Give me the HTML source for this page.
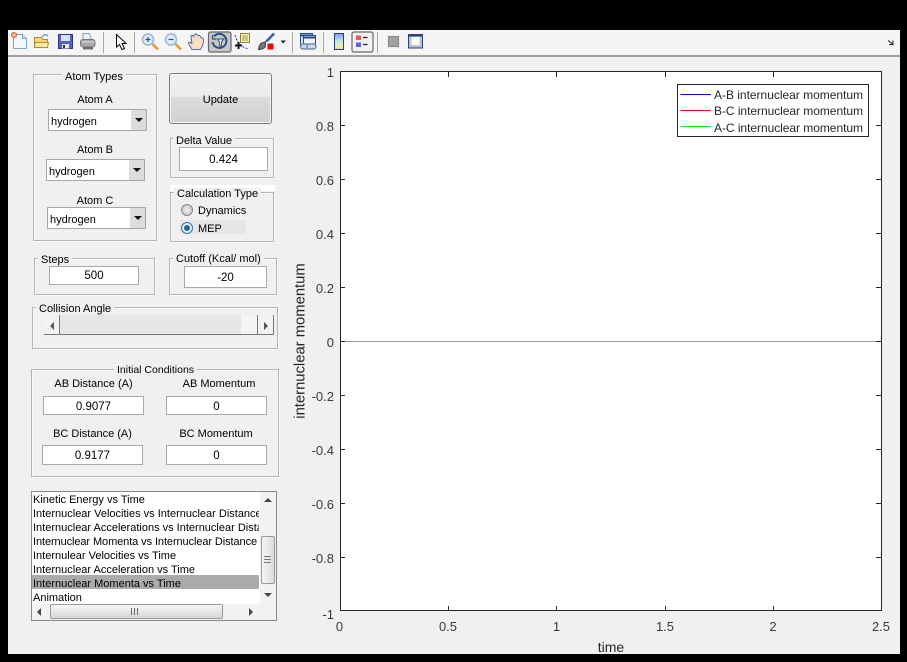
<!DOCTYPE html>
<html><head><meta charset="utf-8">
<style>
html,body{margin:0;padding:0;background:#000;}
#root{position:relative;width:907px;height:662px;overflow:hidden;background:#000;font-family:"Liberation Sans",sans-serif;font-size:11px;color:#000;}
#fig{position:absolute;left:8px;top:30px;width:891.5px;height:623.5px;background:#f0f0f0;}
#tb{position:absolute;left:8px;top:30px;width:891.5px;height:25px;background:#f5f5f5;border-bottom:2px solid #a0a0a0;box-sizing:content-box;}
.a{position:absolute;box-sizing:border-box;}
.p{position:absolute;box-sizing:border-box;border:1px solid #b4b4b4;box-shadow:inset 1px 1px 0 #fafafa,1px 1px 0 #fafafa;}
.l{position:absolute;background:#f0f0f0;padding:0 3px;white-space:nowrap;line-height:13px;height:13px;margin-top:1px;}
.t{position:absolute;white-space:nowrap;line-height:13px;text-align:center;margin-top:1px;}
.i{position:absolute;box-sizing:border-box;background:#fff;border:1px solid #a9a9a9;text-align:center;line-height:20px;font-size:11.5px;padding-top:1px;}
.d{position:absolute;box-sizing:border-box;background:#fff;border:1px solid #a6a6a6;height:22px;width:99px;line-height:23px;padding-left:2px;padding-top:1px;font-size:11px;}
.d b{position:absolute;right:0;top:0;width:15px;height:20px;background:#dcdcdc;}
.d b:after{content:"";position:absolute;left:4px;top:8px;border-left:4px solid transparent;border-right:4px solid transparent;border-top:4px solid #111;}
.r{position:absolute;left:32px;width:227px;height:14px;line-height:14px;font-size:11px;white-space:nowrap;overflow:hidden;margin-top:1px;}
svg{position:absolute;left:0;top:0;}
</style></head><body>
<div id="root">
<div id="fig"></div>
<div id="tb"></div>

<!-- Toolbar icons -->
<svg width="907" height="60" viewBox="0 0 907 60">
<g fill="none">
<!-- separators -->
<path d="M103.5 32V53M134.5 32V53M292.5 32V53M323.5 32V53M377.5 32V53" stroke="#a8a8a8"/>
<!-- new -->
<path d="M13.5 34.5H22.5L26.5 38.500V48.500H13.5Z" fill="#f2f8fd" stroke="#7ea3c8"/>
<path d="M22.500 34.500V38.500H26.500" fill="#cfe2f3" stroke="#7ea3c8"/>
<circle cx="14" cy="35" r="2.500" fill="#f4b183" stroke="#e0603a"/>
<!-- open -->
<path d="M34.500 37.500H41L43 39.500H47.500V47.500H34.500Z" fill="#f3d77e" stroke="#b58a2a"/>
<path d="M34.500 47.500L35 42.500H48.500L47.500 47.500Z" fill="#fbe9a6" stroke="#b58a2a"/>
<path d="M42 37C44 34 46 34 48 36" stroke="#6f8fb3" stroke-width="1.300"/>
<!-- save -->
<rect x="58.500" y="34.500" width="14" height="14" fill="#5b62b8" stroke="#2d3580"/>
<rect x="61" y="35" width="9" height="6" fill="#d8e2f5"/>
<rect x="62" y="44" width="7" height="4.500" fill="#e7e7e7"/>
<rect x="63" y="45" width="2" height="3" fill="#333"/>
<!-- print -->
<path d="M83 33.500H89.500L91.500 40H83Z" fill="#eaf2fa" stroke="#8aa4bc"/>
<rect x="80.500" y="39.500" width="14.500" height="7.500" rx="2.500" fill="#a8a8a8" stroke="#777"/>
<path d="M83 46.500H93V49.500H83Z" fill="#6f6f6f"/>
<path d="M82 42H94" stroke="#dcdcdc"/>
<!-- cursor -->
<path d="M116.500 34.500V47L119.500 44.500L122 49.500L124.500 48.500L122 43.500H126Z" fill="#fff" stroke="#000"/>
<!-- zoom in -->
<circle cx="148" cy="39.500" r="5.500" fill="#dcecf8" stroke="#9bb8d6" stroke-width="1.600"/>
<path d="M145.500 39.500H150.500M148 37V42" stroke="#2b4f8a" stroke-width="1.200"/>
<path d="M152.500 44L158 49.500" stroke="#e39a30" stroke-width="2.600"/>
<!-- zoom out -->
<circle cx="171" cy="39.500" r="5.500" fill="#dcecf8" stroke="#9bb8d6" stroke-width="1.600"/>
<path d="M168.500 39.500H173.500" stroke="#2b4f8a" stroke-width="1.200"/>
<path d="M175.500 44L181 49.500" stroke="#e39a30" stroke-width="2.600"/>
<!-- hand -->
<path d="M192 49.500C190 46 188 44 188.500 42.500C189.500 41.500 191 42.500 192 44L191 36.500C191 35 193 35 193.500 36.500L194.500 35C195 33.500 197 33.500 197 35L198.500 35.500C199.500 35 200.500 36 200.500 37L202 38C203 38 203.500 39 203.500 40C203.500 43 203 46 200.500 49.500Z" fill="#fbdcc0" stroke="#4a6fb5"/>
<!-- rotate button -->
<rect x="208.500" y="32" width="22.500" height="20" rx="2" fill="#c8c8c8" stroke="#666" stroke-width="1.200"/>
<path d="M214 36.500A7 7 0 1 1 212.500 42" stroke="#2f4f86" stroke-width="2"/>
<path d="M212.500 35V39H216" stroke="#2f4f86" stroke-width="1.200"/>
<path d="M217 39H224L221.500 42V46H219.500V42Z" fill="#d8e2ee" stroke="#2f4f86" stroke-width=".9"/>
<!-- data cursor -->
<path d="M235 35C237 43 241 47 249 49" stroke="#2222dd" stroke-dasharray="2 1.500"/>
<rect x="240.500" y="33.500" width="9" height="9" fill="#f5eeb0" stroke="#8a8440"/>
<path d="M242 36H248M242 38H248M242 40H248" stroke="#8a8440" stroke-width=".8"/>
<path d="M238.500 42V49M235 45.500H242" stroke="#111" stroke-width="2"/>
<!-- brush -->
<path d="M265 43L274 33.500" stroke="#3d5fa8" stroke-width="2.600"/>
<path d="M258.500 49.500C259 45 261 42.500 264 42.500L266.500 45C266 47 263 49.500 258.500 49.500Z" fill="#777" stroke="#444"/>
<rect x="266" y="42" width="8" height="8" fill="#fff"/>
<rect x="267.500" y="43.500" width="6" height="6" fill="#ee0000"/>
<path d="M280.500 40.500H286L283.200 43.500Z" fill="#222"/>
<!-- link -->
<rect x="300.500" y="33.500" width="12" height="11" fill="#dfe9f5" stroke="#23497f"/>
<path d="M300.500 35.500H312.500" stroke="#23497f" stroke-width="2"/>
<rect x="303.500" y="35.500" width="12" height="11" fill="#eef3f9" stroke="#23497f"/>
<path d="M303.500 37.500H315.500" stroke="#23497f" stroke-width="2"/>
<rect x="300.500" y="44" width="9" height="5" rx="2.500" fill="#cfd9e4" stroke="#6e8eb0" stroke-width="1.500"/>
<rect x="307" y="44" width="9" height="5" rx="2.500" fill="#cfd9e4" stroke="#6e8eb0" stroke-width="1.500"/>
<!-- colorbar -->
<defs><linearGradient id="cb" x1="0" y1="0" x2="0" y2="1"><stop offset="0" stop-color="#8a90e0"/><stop offset=".35" stop-color="#a8d8f0"/><stop offset=".65" stop-color="#d8f0c0"/><stop offset=".85" stop-color="#f2ecA0"/><stop offset="1" stop-color="#f5b8a0"/></linearGradient></defs>
<rect x="334.500" y="33.500" width="9" height="16" fill="url(#cb)" stroke="#2c3f78"/>
<!-- legend button -->
<rect x="352" y="32" width="21" height="20" rx="2" fill="#f2f2f2" stroke="#666" stroke-width="1.200"/>
<rect x="356" y="35.500" width="5" height="4.500" fill="#e85a5a"/>
<rect x="356" y="42.500" width="5" height="4.500" fill="#6060e0"/>
<path d="M363 37.500H367.500M363 44.500H367.500" stroke="#222" stroke-width="1.200"/>
<!-- square -->
<rect x="388.500" y="36.500" width="10" height="10" fill="#a2a2a2" stroke="#8c8c8c" stroke-width="1.200"/>
<!-- plot tool -->
<rect x="408.500" y="34.500" width="14" height="13.500" fill="#b9c6d2" stroke="#2c3f78"/>
<rect x="411.500" y="37" width="8" height="8" fill="#fff"/>
<path d="M408.500 35.500H422.500" stroke="#2c3f78" stroke-width="2"/>
<!-- corner arrow -->
<path d="M888 40.500L892.500 44M893 40.500V44.500H889" stroke="#222"/>
</g>
</svg>

<!-- Atom Types -->
<div class="p" style="left:33px;top:74px;width:124px;height:167px;"></div>
<div class="l" style="left:62px;top:70px;">Atom Types</div>
<div class="t" style="left:33px;width:124px;top:93px;">Atom A</div>
<div class="d" style="left:48px;top:109px;">hydrogen<b></b></div>
<div class="t" style="left:33px;width:124px;top:143px;">Atom B</div>
<div class="d" style="left:46px;top:159px;">hydrogen<b></b></div>
<div class="t" style="left:33px;width:124px;top:194px;">Atom C</div>
<div class="d" style="left:47px;top:207px;">hydrogen<b></b></div>

<!-- Update -->
<div class="a" style="left:169px;top:73px;width:103px;height:51px;border:1px solid #7a7a7a;border-radius:3px;background:linear-gradient(#f1f1f1 0,#ebebeb 46%,#dcdcdc 47%,#d0d0d0 100%);box-shadow:inset 0 0 0 1px #f6f6f6;text-align:center;line-height:51px;padding-top:1px;">Update</div>

<!-- Delta -->
<div class="p" style="left:170px;top:138px;width:104px;height:40px;"></div>
<div class="l" style="left:173px;top:134px;">Delta Value</div>
<div class="i" style="left:179px;top:147px;width:89px;height:24px;line-height:23px;">0.424</div>

<!-- Calc type -->
<div class="p" style="left:170px;top:192px;width:104px;height:50px;"></div>
<div class="a" style="left:170px;top:185px;width:105px;height:6px;background:#fff;"></div>
<div class="l" style="left:174px;top:187px;">Calculation Type</div>
<div class="a" style="left:180px;top:220px;width:66px;height:14px;background:#e6e6e6;"></div>
<svg width="907" height="662" viewBox="0 0 907 662" style="pointer-events:none">
<defs><radialGradient id="rb"><stop offset="0" stop-color="#f0f0f0"/><stop offset="1" stop-color="#c8c8c8"/></radialGradient></defs>
<circle cx="187" cy="210" r="5.500" fill="url(#rb)" stroke="#8a8a8a"/>
<circle cx="187" cy="228" r="5.500" fill="#e8eef4" stroke="#3d6f99"/>
<circle cx="187" cy="228" r="3" fill="#1c6aa0"/>
</svg>
<div class="t" style="left:198px;top:204px;">Dynamics</div>
<div class="t" style="left:198px;top:222px;">MEP</div>

<!-- Steps / Cutoff -->
<div class="p" style="left:34px;top:258px;width:121px;height:37px;"></div>
<div class="l" style="left:38px;top:253px;">Steps</div>
<div class="i" style="left:49px;top:266px;width:90px;height:19px;line-height:17px;">500</div>
<div class="p" style="left:169px;top:258px;width:108px;height:37px;"></div>
<div class="l" style="left:173px;top:252px;">Cutoff (Kcal/ mol)</div>
<div class="i" style="left:184px;top:266px;width:83px;height:22px;line-height:21px;">-20</div>

<!-- Collision -->
<div class="p" style="left:32px;top:307px;width:246px;height:42px;"></div>
<div class="l" style="left:36px;top:302px;">Collision Angle</div>
<div class="a" style="left:44px;top:315px;width:230px;height:20px;background:#e6e6e6;border-bottom:1px solid #777;"></div>
<div class="a" style="left:44px;top:315px;width:16px;height:20px;background:#f2f2f2;border-right:1px solid #777;border-bottom:1px solid #777;"></div>
<div class="a" style="left:241px;top:315px;width:17px;height:20px;background:#f4f4f4;border-right:1px solid #777;border-bottom:1px solid #777;"></div>
<div class="a" style="left:258px;top:315px;width:16px;height:20px;background:#f2f2f2;border-right:1px solid #777;border-bottom:1px solid #777;"></div>
<div class="a" style="left:50px;top:322px;border-right:4px solid #555;border-top:4px solid transparent;border-bottom:4px solid transparent;"></div>
<div class="a" style="left:264px;top:322px;border-left:4px solid #555;border-top:4px solid transparent;border-bottom:4px solid transparent;"></div>

<!-- Initial conditions -->
<div class="p" style="left:31px;top:369px;width:248px;height:108px;"></div>
<div class="l" style="left:114px;top:363px;font-size:10.500px;">Initial Conditions</div>
<div class="t" style="left:43px;width:101px;top:377px;">AB Distance (A)</div>
<div class="t" style="left:166px;width:106px;top:377px;">AB Momentum</div>
<div class="i" style="left:43px;top:396px;width:101px;height:19px;line-height:18px;">0.9077</div>
<div class="i" style="left:166px;top:396px;width:101px;height:19px;line-height:18px;">0</div>
<div class="t" style="left:42px;width:101px;top:427px;">BC Distance (A)</div>
<div class="t" style="left:166px;width:100px;top:427px;">BC Momentum</div>
<div class="i" style="left:42px;top:445px;width:101px;height:20px;line-height:19px;">0.9177</div>
<div class="i" style="left:166px;top:445px;width:101px;height:20px;line-height:19px;">0</div>

<!-- Listbox -->
<div class="a" style="left:31px;top:491px;width:246px;height:130px;background:#fff;border:1px solid #7f8a96;"></div>
<div class="a" style="left:32px;top:575px;width:227px;height:14px;background:#ababab;"></div>
<div class="r" style="left:33px;top:492px;width:226px;">Kinetic Energy vs Time</div>
<div class="r" style="left:33px;top:506px;width:226px;">Internuclear Velocities vs Internuclear Distance</div>
<div class="r" style="left:33px;top:520px;width:226px;">Internuclear Accelerations vs Internuclear Distance</div>
<div class="r" style="left:33px;top:534px;width:226px;letter-spacing:-.09px;">Internuclear Momenta vs Internuclear Distance</div>
<div class="r" style="left:33px;top:548px;width:226px;">Internulear Velocities vs Time</div>
<div class="r" style="left:33px;top:562px;width:226px;">Internuclear Acceleration vs Time</div>
<div class="r" style="left:33px;top:576px;width:226px;">Internuclear Momenta vs Time</div>
<div class="r" style="left:33px;top:590px;width:226px;">Animation</div>
<div class="a" style="left:260px;top:492px;width:16px;height:128px;background:#f2f2f2;"></div>
<div class="a" style="left:32px;top:604px;width:244px;height:16px;background:#f2f2f2;"></div>
<div class="a" style="left:261px;top:536px;width:14px;height:48px;background:linear-gradient(90deg,#f5f5f5,#dcdcdc);border:1px solid #999;border-radius:2px;"></div>
<div class="a" style="left:264px;top:556px;width:7px;height:7px;border-top:1px solid #777;border-bottom:1px solid #777;"></div>
<div class="a" style="left:264px;top:559px;width:7px;height:1px;background:#777;"></div>
<div class="a" style="left:50px;top:604px;width:173px;height:15px;background:linear-gradient(#f7f7f7,#d6d6d6);border:1px solid #999;border-radius:2px;"></div>
<div class="a" style="left:131px;top:608px;width:8px;height:7px;background:repeating-linear-gradient(90deg,#666 0,#666 1px,transparent 1px,transparent 3px);"></div>
<div class="a" style="left:264px;top:498px;border-bottom:4px solid #444;border-left:4px solid transparent;border-right:4px solid transparent;"></div>
<div class="a" style="left:264px;top:593px;border-top:4px solid #444;border-left:4px solid transparent;border-right:4px solid transparent;"></div>
<div class="a" style="left:37px;top:608px;border-right:4px solid #444;border-top:4px solid transparent;border-bottom:4px solid transparent;"></div>
<div class="a" style="left:249px;top:608px;border-left:4px solid #444;border-top:4px solid transparent;border-bottom:4px solid transparent;"></div>

<!-- Plot -->
<svg width="907" height="662" viewBox="0 0 907 662" style="font-family:'Liberation Sans',sans-serif;">
<rect x="340" y="72" width="542" height="539" fill="#fff"/>
<path d="M345 341.500H876" stroke="#999"/>
<path d="M340.500 71.500H881.500V610.500H340.500Z" fill="none" stroke="#262626"/>
<path fill="none" stroke="#262626" d="
M448.500 611v-5M556.500 611v-5M665.500 611v-5M773.500 611v-5
M448.500 72v5M556.500 72v5M665.500 72v5M773.500 72v5
M340 125.500h5M340 179.500h5M340 233.500h5M340 287.500h5M340 341.500h5M340 395.500h5M340 449.500h5M340 503.500h5M340 557.500h5
M881 125.500h-5M881 179.500h-5M881 233.500h-5M881 287.500h-5M881 341.500h-5M881 395.500h-5M881 449.500h-5M881 503.500h-5M881 557.500h-5"/>
<g font-size="13" fill="#3a3a3a" text-anchor="end">
<text x="334" y="77">1</text><text x="334" y="131">0.8</text><text x="334" y="185">0.6</text><text x="334" y="239">0.4</text><text x="334" y="293">0.2</text><text x="334" y="347">0</text><text x="334" y="401">-0.2</text><text x="334" y="455">-0.4</text><text x="334" y="509">-0.6</text><text x="334" y="563">-0.8</text><text x="334" y="619">-1</text>
</g>
<g font-size="13" fill="#3a3a3a" text-anchor="middle">
<text x="339.500" y="631">0</text><text x="448" y="631">0.5</text><text x="556.500" y="631">1</text><text x="665" y="631">1.5</text><text x="773" y="631">2</text><text x="881" y="631">2.5</text>
</g>
<text x="611" y="652" font-size="14" fill="#262626" text-anchor="middle">time</text>
<text transform="translate(304.500,341) rotate(-90)" font-size="14.800" fill="#262626" text-anchor="middle">internuclear momentum</text>
<rect x="677.500" y="84.500" width="191" height="52" fill="#fff" stroke="#262626"/>
<path d="M680.500 94.500H711" stroke="#0000ff"/>
<path d="M680.500 110.500H711" stroke="#ff0000"/>
<path d="M680.500 126.500H711" stroke="#00ee00"/>
<g font-size="12" fill="#262626">
<text x="714" y="99" textLength="149">A-B internuclear momentum</text>
<text x="714" y="115" textLength="149">B-C internuclear momentum</text>
<text x="714" y="132" textLength="149">A-C internuclear momentum</text>
</g>
</svg>
</div>
</body></html>
